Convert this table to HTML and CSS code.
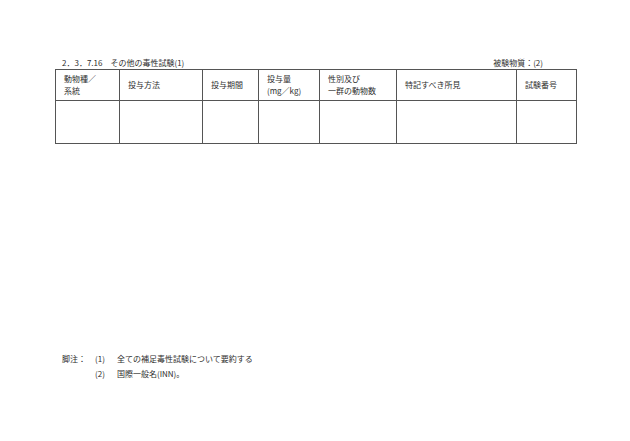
FILE: index.html
```html
<!DOCTYPE html>
<html lang="ja">
<head>
<meta charset="utf-8">
<link rel="stylesheet" href="styles.css">
</head>
<body>
<div class="page">
  <div class="caption">
    <span class="title">2．3．7.16　その他の毒性試験(1)</span>
    <span class="substance">被験物質：(2)</span>
  </div>
  <table class="grid">
    <colgroup>
      <col class="c1"><col class="c2"><col class="c3"><col class="c4"><col class="c5"><col class="c6"><col class="c7">
    </colgroup>
    <thead>
      <tr class="head">
        <th>動物種／<br>系統</th>
        <th>投与方法</th>
        <th>投与期間</th>
        <th>投与量<br>(mg／kg)</th>
        <th>性別及び<br>一群の動物数</th>
        <th>特記すべき所見</th>
        <th>試験番号</th>
      </tr>
    </thead>
    <tbody>
      <tr class="body">
        <td></td><td></td><td></td><td></td><td></td><td></td><td></td>
      </tr>
    </tbody>
  </table>
  <div class="notes">
    <span class="label">脚注：</span><span class="num">(1)</span><span class="txt">全ての補足毒性試験について要約する</span>
    <span></span><span class="num">(2)</span><span class="txt">国際一般名(INN)。</span>
  </div>
</div>
</body>
</html>
```
FILE: styles.css
```css
html, body {
  margin: 0;
  padding: 0;
  background: #ffffff;
}
body {
  font-family: "Noto Sans CJK JP", "Noto Sans", sans-serif;
  font-size: 8px;
  color: #2e2e2e;
}
.page {
  width: 630px;
  height: 441px;
  box-sizing: border-box;
  padding: 56px 54px 0 55px;
}
.caption {
  display: flex;
  justify-content: space-between;
  height: 13px;
  line-height: 13px;
  padding: 0 33px 0 7px;
}
.grid {
  border-collapse: collapse;
  table-layout: fixed;
  width: 521px;
}
.c1 { width: 64px; }
.c2 { width: 83px; }
.c3 { width: 56px; }
.c4 { width: 61px; }
.c5 { width: 77px; }
.c6 { width: 120px; }
.c7 { width: 60px; }
.grid th, .grid td {
  border: 1px solid #555555;
  padding: 0 0 0 8px;
  text-align: left;
  font-weight: normal;
  line-height: 11.6px;
  vertical-align: middle;
}
.head { height: 31px; }
.body { height: 43px; }
.notes {
  display: grid;
  grid-template-columns: 33px 22px auto;
  margin-top: 208px;
  padding-left: 7px;
  line-height: 14.5px;
}
```
